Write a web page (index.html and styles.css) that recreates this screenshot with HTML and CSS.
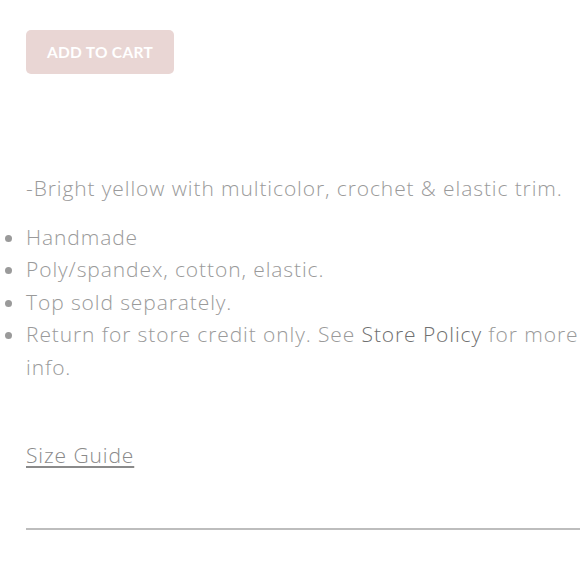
FILE: index.html
```html
<!DOCTYPE html>
<html>
<head>
<meta charset="utf-8">
<link rel="stylesheet" href="styles.css">
</head>
<body>
<div class="product">
  <button class="add-to-cart">ADD TO CART</button>
  <div class="description">
    <p class="lead">-Bright yellow with multicolor, crochet &amp; elastic trim.</p>
    <ul class="details">
      <li>Handmade</li>
      <li>Poly/spandex, cotton, elastic.</li>
      <li>Top sold separately.</li>
      <li>Return for store credit only. See <a class="policy" href="#">Store Policy</a> for more info.</li>
    </ul>
    <a class="size-guide" href="#">Size Guide</a>
  </div>
  <div class="divider"></div>
</div>
</body>
</html>
```
FILE: styles.css
```css
html, body {
  margin: 0;
  padding: 0;
  background: #fff;
}
body {
  font-family: "Open Sans", "Noto Sans", sans-serif;
  color: #9a9a9a;
  overflow: hidden;
}
.product {
  padding: 30px 0 0 26px;
}
.add-to-cart {
  display: block;
  width: 148px;
  height: 44px;
  border: none;
  border-radius: 5px;
  background: #e9d6d4;
  color: #fff;
  font-family: "Lato", sans-serif;
  font-weight: 700;
  font-size: 15.5px;
  letter-spacing: 0.3px;
  padding: 0;
}
.description {
  font-size: 21px;
  font-weight: 300;
  line-height: 32.5px;
  letter-spacing: 0.9px;
  margin-top: 98px;
}
.lead {
  margin: 0 0 16px 0;
}
.details {
  margin: 0;
  padding: 0;
}
.details li::marker {
  color: #9a9a9a;
}
.policy {
  color: #707070;
  text-decoration: none;
}
.size-guide {
  display: inline-block;
  margin-top: 56px;
  color: #8a8a8a;
  text-decoration: underline;
  text-underline-offset: 3px;
  text-decoration-thickness: 2px;
}
.divider {
  margin-top: 56px;
  height: 2px;
  background: #bdbdbd;
}
```
